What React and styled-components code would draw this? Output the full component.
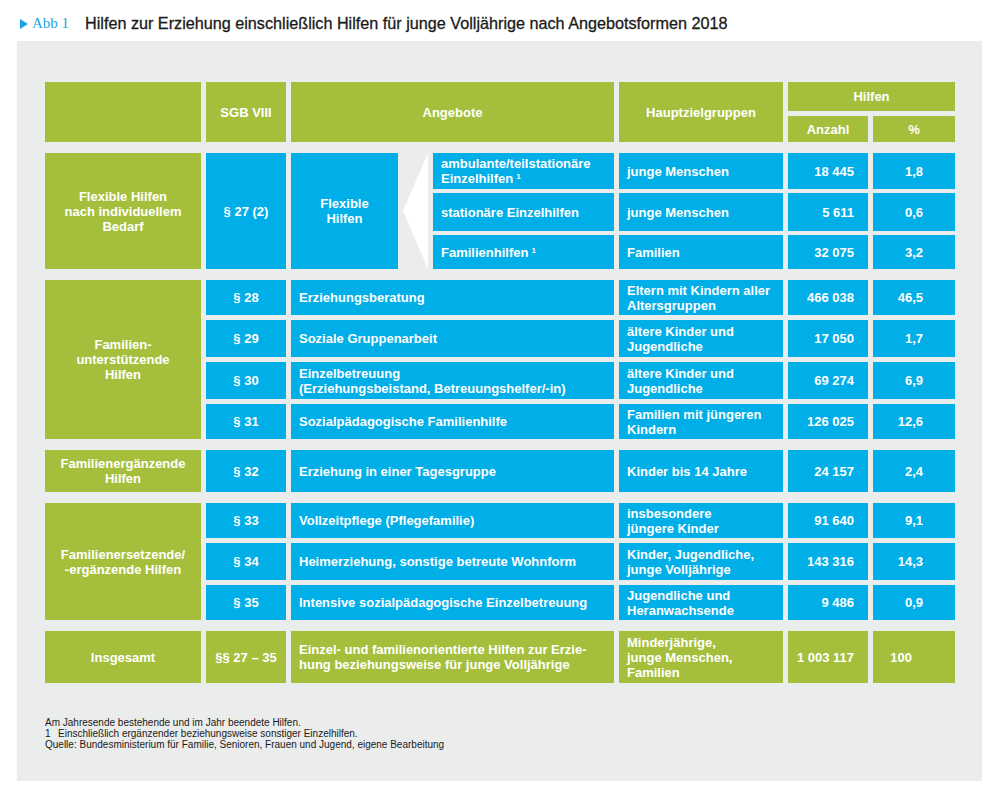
import React from 'react';
import styled, { createGlobalStyle } from 'styled-components';

const GREEN = '#a5bf3c';
const BLUE = '#00aee8';

const GlobalStyle = createGlobalStyle`
  body {
    margin: 0;
    background: #ffffff;
    font-family: 'Liberation Sans', Arial, sans-serif;
  }
`;

const Page = styled.div`
  width: 1000px;
  height: 799px;
`;

const Header = styled.header`
  height: 41px;
  box-sizing: border-box;
  padding: 6px 0 0 20px;
  display: flex;
  align-items: center;
`;

const Marker = styled.span`
  width: 0;
  height: 0;
  border-top: 5px solid transparent;
  border-bottom: 5px solid transparent;
  border-left: 8px solid #1ea2e4;
  margin-right: 4px;
`;

const AbbLabel = styled.span`
  font-family: 'Liberation Serif', 'Times New Roman', serif;
  font-size: 15px;
  color: #1ea2e4;
  width: 53px;
`;

const Title = styled.h1`
  margin: 0;
  font-size: 16.2px;
  font-weight: 400;
  color: #1a1a1a;
  -webkit-text-stroke: 0.3px #1a1a1a;
`;

const Panel = styled.section`
  margin-left: 17px;
  width: 965px;
  height: 740px;
  box-sizing: border-box;
  padding: 41px 0 0 28px;
  background: #ebecec;
`;

const Table = styled.div`
  display: flex;
  flex-direction: column;
  gap: 11px;
  width: 910px;
`;

const Block = styled.div`
  display: grid;
  grid-template-columns: 156px 80px 107px 25px 181px 164px 80px 82px;
  grid-template-rows: ${(p) => p.$rows};
  column-gap: 5px;
  row-gap: ${(p) => p.$gap || 5}px;
`;

const Cell = styled.div`
  grid-column: ${(p) => p.$col};
  grid-row: ${(p) => p.$row || 'auto'};
  background: ${(p) => (p.$tone === 'blue' ? BLUE : GREEN)};
  color: #ffffff;
  font-size: 13px;
  font-weight: 700;
  line-height: 15px;
  white-space: nowrap;
  display: flex;
  align-items: center;
  justify-content: ${(p) =>
    p.$align === 'left' ? 'flex-start' : p.$align === 'right' ? 'flex-end' : 'center'};
  text-align: ${(p) => p.$align || 'center'};
  padding: ${(p) =>
    p.$align === 'left' ? '0 0 0 8px' : p.$align === 'right' ? `0 ${p.$pad || 14}px 0 0` : '0'};
`;

const Arrow = styled.div`
  grid-column: 4 / 5;
  grid-row: 1 / 4;
  background: #ffffff;
  clip-path: polygon(0 50%, 100% 0, 100% 100%);
`;

const Sup = styled.sup`
  font-size: 8px;
  line-height: 0;
  margin-left: 3px;
  vertical-align: 4px;
`;

const Notes = styled.div`
  margin-top: 34px;
  font-size: 10px;
  line-height: 11px;
  color: #1a1a1a;
`;

const NoteNum = styled.span`
  display: inline-block;
  width: 13px;
`;

const C = ({ children, ...props }) => (
  <Cell {...props}>
    <span>{children}</span>
  </Cell>
);

const support = [
  ['§ 28', 'Erziehungsberatung', <>Eltern mit Kindern aller<br />Altersgruppen</>, '466 038', '46,5'],
  ['§ 29', 'Soziale Gruppenarbeit', <>ältere Kinder und<br />Jugendliche</>, '17 050', '1,7'],
  ['§ 30', <>Einzelbetreuung<br />(Erziehungsbeistand, Betreuungshelfer/-in)</>, <>ältere Kinder und<br />Jugendliche</>, '69 274', '6,9'],
  ['§ 31', 'Sozialpädagogische Familienhilfe', <>Familien mit jüngeren<br />Kindern</>, '126 025', '12,6'],
];

const replace = [
  ['§ 33', 'Vollzeitpflege (Pflegefamilie)', <>insbesondere<br />jüngere Kinder</>, '91 640', '9,1'],
  ['§ 34', 'Heimerziehung, sonstige betreute Wohnform', <>Kinder, Jugendliche,<br />junge Volljährige</>, '143 316', '14,3'],
  ['§ 35', 'Intensive sozialpädagogische Einzelbetreuung', <>Jugendliche und<br />Heranwachsende</>, '9 486', '0,9'],
];

const flexible = [
  [<>ambulante/teilstationäre<br />Einzelhilfen<Sup>1</Sup></>, 'junge Menschen', '18 445', '1,8'],
  ['stationäre Einzelhilfen', 'junge Menschen', '5 611', '0,6'],
  [<>Familienhilfen<Sup>1</Sup></>, 'Familien', '32 075', '3,2'],
];

const Rows = ({ data }) =>
  data.map(([para, offer, group, count, pct], i) => (
    <React.Fragment key={i}>
      <C $tone="blue" $col="2 / 3" $row={i + 1}>{para}</C>
      <C $tone="blue" $col="3 / 6" $row={i + 1} $align="left">{offer}</C>
      <C $tone="blue" $col="6 / 7" $row={i + 1} $align="left">{group}</C>
      <C $tone="blue" $col="7 / 8" $row={i + 1} $align="right">{count}</C>
      <C $tone="blue" $col="8 / 9" $row={i + 1} $align="right" $pad={32}>{pct}</C>
    </React.Fragment>
  ));

const App = () => (
  <Page>
    <GlobalStyle />
    <Header>
      <Marker />
      <AbbLabel>Abb 1</AbbLabel>
      <Title>Hilfen zur Erziehung einschließlich Hilfen für junge Volljährige nach Angebotsformen 2018</Title>
    </Header>
    <Panel>
      <Table>
        <Block $rows="29px 26px">
          <C $col="1 / 2" $row="1 / 3" />
          <C $col="2 / 3" $row="1 / 3">SGB VIII</C>
          <C $col="3 / 6" $row="1 / 3">Angebote</C>
          <C $col="6 / 7" $row="1 / 3">Hauptzielgruppen</C>
          <C $col="7 / 9" $row="1 / 2">Hilfen</C>
          <C $col="7 / 8" $row="2 / 3">Anzahl</C>
          <C $col="8 / 9" $row="2 / 3">%</C>
        </Block>

        <Block $rows="36px 38px 34px" $gap={4}>
          <C $col="1 / 2" $row="1 / 4">Flexible Hilfen<br />nach individuellem<br />Bedarf</C>
          <C $tone="blue" $col="2 / 3" $row="1 / 4">§ 27 (2)</C>
          <C $tone="blue" $col="3 / 4" $row="1 / 4">Flexible<br />Hilfen</C>
          <Arrow />
          {flexible.map(([offer, group, count, pct], i) => (
            <React.Fragment key={i}>
              <C $tone="blue" $col="5 / 6" $row={i + 1} $align="left">{offer}</C>
              <C $tone="blue" $col="6 / 7" $row={i + 1} $align="left">{group}</C>
              <C $tone="blue" $col="7 / 8" $row={i + 1} $align="right">{count}</C>
              <C $tone="blue" $col="8 / 9" $row={i + 1} $align="right" $pad={32}>{pct}</C>
            </React.Fragment>
          ))}
        </Block>

        <Block $rows="35px 37px 37px 35px">
          <C $col="1 / 2" $row="1 / 5">Familien-<br />unterstützende<br />Hilfen</C>
          <Rows data={support} />
        </Block>

        <Block $rows="42px">
          <C $col="1 / 2" $row="1">Familienergänzende<br />Hilfen</C>
          <C $tone="blue" $col="2 / 3" $row="1">§ 32</C>
          <C $tone="blue" $col="3 / 6" $row="1" $align="left">Erziehung in einer Tagesgruppe</C>
          <C $tone="blue" $col="6 / 7" $row="1" $align="left">Kinder bis 14 Jahre</C>
          <C $tone="blue" $col="7 / 8" $row="1" $align="right">24 157</C>
          <C $tone="blue" $col="8 / 9" $row="1" $align="right" $pad={32}>2,4</C>
        </Block>

        <Block $rows="35px 37px 35px">
          <C $col="1 / 2" $row="1 / 4">Familienersetzende/<br />-ergänzende Hilfen</C>
          <Rows data={replace} />
        </Block>

        <Block $rows="52px">
          <C $col="1 / 2" $row="1">Insgesamt</C>
          <C $col="2 / 3" $row="1">§§ 27 – 35</C>
          <C $col="3 / 6" $row="1" $align="left">Einzel- und familienorientierte Hilfen zur Erzie-<br />hung beziehungsweise für junge Volljährige</C>
          <C $col="6 / 7" $row="1" $align="left">Minderjährige,<br />junge Menschen,<br />Familien</C>
          <C $col="7 / 8" $row="1" $align="right">1 003 117</C>
          <C $col="8 / 9" $row="1" $align="right" $pad={43}>100</C>
        </Block>
      </Table>
      <Notes>
        <div>Am Jahresende bestehende und im Jahr beendete Hilfen.</div>
        <div><NoteNum>1</NoteNum>Einschließlich ergänzender beziehungsweise sonstiger Einzelhilfen.</div>
        <div>Quelle: Bundesministerium für Familie, Senioren, Frauen und Jugend, eigene Bearbeitung</div>
      </Notes>
    </Panel>
  </Page>
);

export default App;
